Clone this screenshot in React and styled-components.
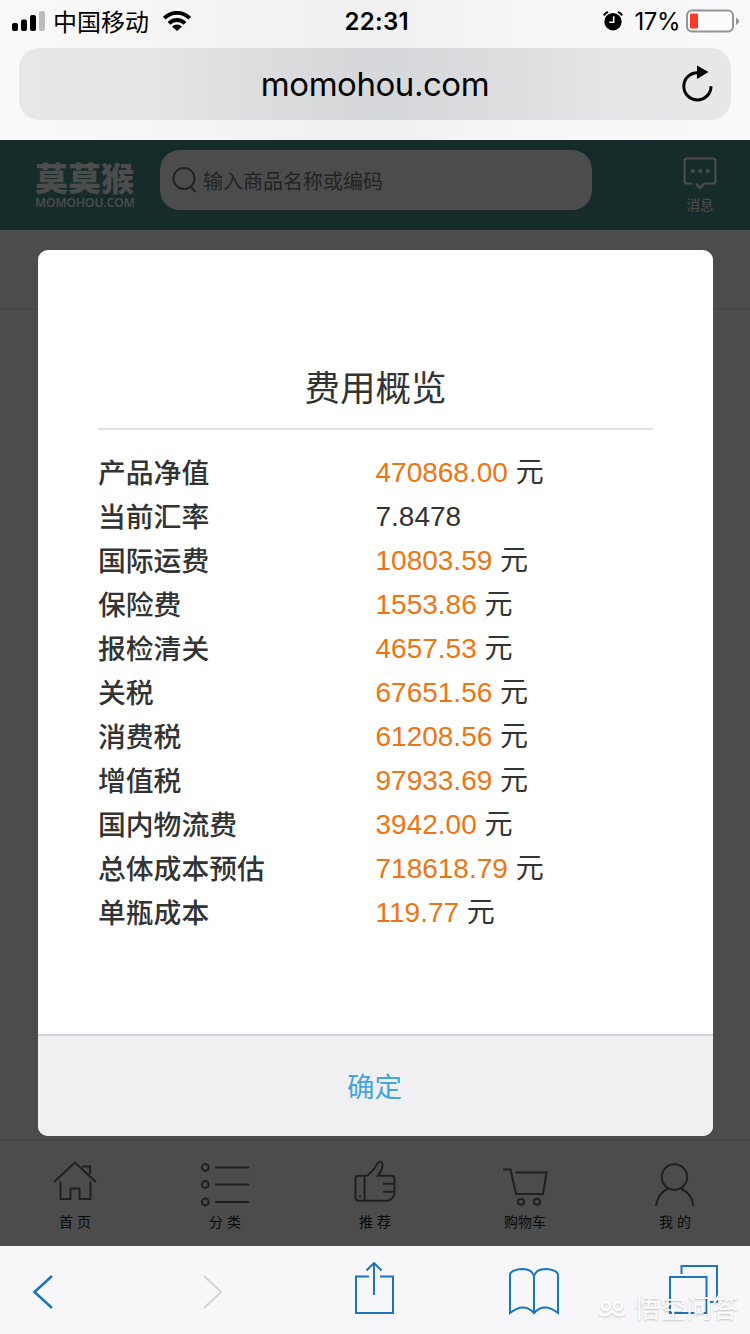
import styled, { createGlobalStyle, css } from 'styled-components';

const GlobalStyle = createGlobalStyle`
  * {
    box-sizing: border-box;
  }
  body {
    margin: 0;
    font-family: 'Liberation Sans', 'Noto Sans CJK SC', sans-serif;
    color: #333;
  }
  svg {
    display: block;
    flex-shrink: 0;
  }
`;

const Screen = styled.div`
  width: 750px;
  height: 1334px;
  display: flex;
  flex-direction: column;
  overflow: hidden;
`;

const BrowserTop = styled.header`
  height: 140px;
  display: flex;
  flex-direction: column;
  background: linear-gradient(90deg, #fafafa 0%, #f3f3f3 30%, #f0f0f0 50%, #f7f7f7 75%, #f9f9fc 100%);
`;

const StatusBar = styled.div`
  height: 40px;
  padding: 0 11px 0 12px;
  display: grid;
  grid-template-columns: 1fr 66px 1fr;
  align-items: center;
  color: #000;
  font-family: Inter, 'Noto Sans CJK SC', sans-serif;
  font-size: 24px;
  line-height: 40px;
`;

const StatusGroup = styled.div`
  display: flex;
  align-items: center;
  justify-content: ${({ $end }) => ($end ? 'flex-end' : 'flex-start')};
`;

const Carrier = styled.span`
  margin: 0 14px 0 8px;
  font-family: 'Noto Sans CJK SC', sans-serif;
`;

const Clock = styled.span`
  padding: 2px 0 0 2px;
  font-weight: 600;
  letter-spacing: 0.3px;
  white-space: nowrap;
`;

const Percent = styled.span`
  margin: 0 6px 0 12px;
  padding-top: 2px;
  letter-spacing: -0.5px;
`;

const AddressBar = styled.div`
  height: 72px;
  margin: 8px 19px 0;
  padding: 0 16px;
  border-radius: 20px;
  display: grid;
  grid-template-columns: 36px 1fr 36px;
  align-items: center;
  background: linear-gradient(90deg, #e8e8e8 0%, #e5e5e6 18%, #dcdcde 36%, #d6d7da 50%, #dddde0 68%, #e6e6e9 85%, #e7e7ea 100%);
  color: #000;
`;

const Url = styled.span`
  grid-column: 2;
  text-align: center;
  font-family: Inter, sans-serif;
  font-size: 33px;
  letter-spacing: -0.45px;
`;

const Page = styled.main`
  position: relative;
  height: 1106px;
  display: flex;
  flex-direction: column;
  background: #fdfdff;
`;

const ShopHeader = styled.div`
  height: 90px;
  padding: 10px 32px 0 35px;
  display: flex;
  align-items: flex-start;
  background: #46938f;
  color: #fff;
`;

const Logo = styled.div`
  width: 100px;
  margin: 9px 25px 0 0;
`;

const LogoName = styled.div`
  font-family: 'Noto Sans CJK SC', sans-serif;
  font-size: 33px;
  font-weight: 900;
  line-height: 36px;
  white-space: nowrap;
`;

const LogoDomain = styled.div`
  margin-top: 2px;
  font-family: 'Open Sans', sans-serif;
  font-size: 12px;
  font-weight: 600;
  line-height: 12px;
  white-space: nowrap;
`;

const SearchBox = styled.div`
  width: 432px;
  height: 60px;
  padding-left: 12px;
  border-radius: 20px;
  display: flex;
  align-items: center;
  gap: 5px;
  background: #fff;
  color: #777;
  font-size: 20px;
`;

const Message = styled.div`
  width: 36px;
  margin: 6px 0 0 auto;
  display: flex;
  flex-direction: column;
  align-items: center;
  gap: 7px;
  font-size: 13.6px;
  line-height: 18px;
  white-space: nowrap;
`;

const ListHead = styled.div`
  height: 80px;
  border-bottom: 2px solid #f0f0f2;
`;

const TabBar = styled.nav`
  height: 107px;
  margin-top: auto;
  border-top: 2px solid #eaeaea;
  display: grid;
  grid-template-columns: repeat(5, 1fr);
`;

const Tab = styled.div`
  padding-top: 14px;
  display: flex;
  flex-direction: column;
  align-items: center;
  color: #6c6c70;
  span {
    margin-top: -3px;
    color: #222;
    font-size: 14px;
    line-height: 20px;
    white-space: pre;
  }
`;

const Mask = styled.div`
  position: absolute;
  inset: 0;
  padding: 110px 37px 0 38px;
  background: rgba(0, 0, 0, 0.7);
`;

const Dialog = styled.section`
  height: 886px;
  border-radius: 10px;
  display: flex;
  flex-direction: column;
  overflow: hidden;
  background: #fff;
`;

const DialogBody = styled.div`
  flex: 1;
  padding: 106px 60px 0;
`;

const DialogTitle = styled.h1`
  margin: 0 0 21px;
  padding-bottom: 6px;
  border-bottom: 2px solid #e0e2e2;
  font-size: 35.5px;
  font-weight: 400;
  line-height: 66px;
  text-align: center;
`;

const FeeRow = styled.div`
  height: 44px;
  display: grid;
  grid-template-columns: 1fr 1fr;
  font-size: 28px;
  line-height: 44px;
`;

const FeeName = styled.span`
  padding-top: 1px;
  font-size: 27.8px;
  font-weight: 500;
`;

const Amount = styled.span`
  ${({ $plain }) =>
    !$plain &&
    css`
      color: #ee7514;
    `}
`;

const ConfirmButton = styled.button`
  height: 102px;
  padding: 0 2px 3px 0;
  border: 0;
  border-top: 2px solid #d3d4d6;
  background: #f0f0f3;
  color: #45a5dc;
  font: inherit;
  font-size: 27.5px;
`;

const BrowserToolbar = styled.footer`
  position: relative;
  height: 88px;
  padding: 4px 0 0 13px;
  display: grid;
  grid-template-columns: 169px 162px 160px 160px 60px;
  align-items: center;
  background: #f7f7f9;
  color: #1b76bd;
`;

const Watermark = styled.div`
  position: absolute;
  right: 12px;
  bottom: 5px;
  display: flex;
  align-items: center;
  gap: 8px;
  color: #fcfcfd;
  font-size: 26px;
  line-height: 40px;
  text-shadow: 0 1px 2px rgba(0, 0, 0, 0.22);
  svg {
    filter: drop-shadow(0 1px 1px rgba(0, 0, 0, 0.18));
  }
`;

const Line = ({ w = 60, h = 60, sw = 2, children, ...rest }) => (
  <svg width={w} height={h} viewBox={`0 0 ${w} ${h}`} fill="none" stroke="currentColor" strokeWidth={sw} {...rest}>
    {children}
  </svg>
);

const SignalIcon = () => (
  <svg width="33" height="20" viewBox="0 0 33 20">
    <rect x="0" y="12" width="6" height="8" rx="2" />
    <rect x="9" y="8.500" width="6" height="11.500" rx="2" />
    <rect x="18" y="4" width="6" height="16" rx="2" />
    <rect x="27" y="0" width="6" height="20" rx="2" fill="#bdbdbd" />
  </svg>
);

const WifiIcon = () => (
  <svg width="28" height="20" viewBox="0 0 28 20">
    <g fill="none" stroke="#000" strokeWidth="3.800">
      <path d="M1.300 7.200a18 18 0 0 1 25.400 0" />
      <path d="M6 12.300a11.300 11.300 0 0 1 16 0" />
    </g>
    <path d="M9 15.500a7.200 7.200 0 0 1 10 0l-5 4.500z" />
  </svg>
);

const AlarmIcon = () => (
  <svg width="20" height="20" viewBox="0 0 20 20">
    <circle cx="10" cy="10.700" r="8.700" />
    <path d="M.8 4.300A12 12 0 0 1 5 .9M19.200 4.300A12 12 0 0 0 15 .9" fill="none" stroke="#000" strokeWidth="2" />
    <path d="M10.700 5.300v6H6.300" fill="none" stroke="#fff" strokeWidth="1.500" />
  </svg>
);

const BatteryIcon = () => (
  <svg width="53" height="24" viewBox="0 0 53 24">
    <rect x="1" y="1.500" width="46" height="21" rx="5" fill="#fbfbfb" stroke="#949494" strokeWidth="2" />
    <rect x="4" y="4.500" width="8" height="15" rx="1" fill="#f93c2c" />
    <path d="M50 8.500q3 1.500 3 3.700T50 16z" fill="#949494" />
  </svg>
);

const ReloadIcon = () => (
  <svg width="36" height="40" viewBox="0 0 36 40">
    <path d="M32 22.200A13.600 13.600 0 1 1 18.500 8.700" fill="none" stroke="#000" strokeWidth="3" />
    <path d="M18 1.500v13.500l11.500-7z" />
  </svg>
);

const tabs = [
  {
    name: '首 页',
    icon: (
      <>
        <path d="M9 27 30 7.500 51 27M15.500 26.500V44h10V33.500h9V44h11V26.500" />
        <path d="M37 11.500h8V19" />
      </>
    ),
  },
  {
    name: '分 类',
    icon: (
      <>
        <circle cx="10.300" cy="12.500" r="3.400" />
        <circle cx="10.300" cy="29.500" r="3.400" />
        <circle cx="10.300" cy="47" r="3.400" />
        <path d="M20 12.500h34M20 29.500h34M20 47h34" />
      </>
    ),
  },
  {
    name: '推 荐',
    icon: (
      <>
        <path d="M19.500 20.700h-6q-3 0-3 3v19q0 3 3 3H43q6.500-2 6.500-9V24q0-3.300-3.300-3.300H33q5-7 4.500-11.700-1.500-3.500-4.500-1.500l-4 6.500-6.500 6.500-3 .2v25" />
        <path d="M38 28.700h11.500M38 36.700h11.500M15 40.500v2" />
      </>
    ),
  },
  {
    name: '购物车',
    icon: (
      <>
        <path d="M8 14.500h7.500L21 39h27l3.500-21.500H20.500" />
        <circle cx="26" cy="46.700" r="3" />
        <circle cx="42" cy="46.700" r="3" />
      </>
    ),
  },
  {
    name: '我 的',
    icon: (
      <>
        <circle cx="29.500" cy="22" r="12.700" />
        <path d="M11 51q1.500-12 12-17.500M36 33.500Q47 39 48.500 51" />
      </>
    ),
  },
];

const fees = [
  { name: '产品净值', amount: '470868.00', unit: '元' },
  { name: '当前汇率', amount: '7.8478' },
  { name: '国际运费', amount: '10803.59', unit: '元' },
  { name: '保险费', amount: '1553.86', unit: '元' },
  { name: '报检清关', amount: '4657.53', unit: '元' },
  { name: '关税', amount: '67651.56', unit: '元' },
  { name: '消费税', amount: '61208.56', unit: '元' },
  { name: '增值税', amount: '97933.69', unit: '元' },
  { name: '国内物流费', amount: '3942.00', unit: '元' },
  { name: '总体成本预估', amount: '718618.79', unit: '元' },
  { name: '单瓶成本', amount: '119.77', unit: '元' },
];

const FeeDialog = () => (
  <Mask>
    <Dialog>
      <DialogBody>
        <DialogTitle>费用概览</DialogTitle>
        {fees.map(({ name, amount, unit }) => (
          <FeeRow key={name}>
            <FeeName>{name}</FeeName>
            <span>
              <Amount $plain={!unit}>{amount}</Amount>
              {unit && ` ${unit}`}
            </span>
          </FeeRow>
        ))}
      </DialogBody>
      <ConfirmButton>确定</ConfirmButton>
    </Dialog>
  </Mask>
);

const App = () => {
  return (
    <Screen>
      <GlobalStyle />
      <BrowserTop>
        <StatusBar>
          <StatusGroup>
            <SignalIcon />
            <Carrier>中国移动</Carrier>
            <WifiIcon />
          </StatusGroup>
          <Clock>22:31</Clock>
          <StatusGroup $end>
            <AlarmIcon />
            <Percent>17%</Percent>
            <BatteryIcon />
          </StatusGroup>
        </StatusBar>
        <AddressBar>
          <Url>momohou.com</Url>
          <ReloadIcon />
        </AddressBar>
      </BrowserTop>

      <Page>
        <ShopHeader>
          <Logo>
            <LogoName>莫莫猴</LogoName>
            <LogoDomain>MOMOHOU.COM</LogoDomain>
          </Logo>
          <SearchBox>
            <Line w={26} h={28}>
              <circle cx="12" cy="12.500" r="10.500" />
              <path d="m18.500 20.500 5 5.500" />
            </Line>
            输入商品名称或编码
          </SearchBox>
          <Message>
            <Line w={34} h={34} sw={2.2}>
              <path d="M9.500 27.500H4q-2.500 0-2.500-2.500V5Q1.500 2.500 4 2.500h26q2.500 0 2.500 2.500v20q0 2.500-2.500 2.500h-8.500L17 32l-4-4.500" />
              <path d="M8 15h3.500M15.500 15H19M23 15h3.500" strokeWidth="3.500" />
            </Line>
            消息
          </Message>
        </ShopHeader>
        <ListHead />
        <TabBar>
          {tabs.map(({ name, icon }) => (
            <Tab key={name}>
              <Line>{icon}</Line>
              <span>{name}</span>
            </Tab>
          ))}
        </TabBar>
        <FeeDialog />
      </Page>

      <BrowserToolbar>
        <Line sw={2.6}>
          <path d="M39 14 21.500 30 39 46" />
        </Line>
        <Line sw={2.2} color="#d5d6d9">
          <path d="m22 14 17 16-17 16" />
        </Line>
        <Line>
          <path d="M25 14.500H12V51h37V14.500H36M30 33V1M22.500 8.500 30 1l7.500 7.500" />
        </Line>
        <Line>
          <path d="M30 52V14Q28 7 18 7 6 8 6 13v38q14-11 24 0 10-11 24 0V13Q54 8 42 7q-10 0-12 7" />
        </Line>
        <Line>
          <path d="M6 15h36.500v36H6zM17.500 12V4H53v36h-7" />
        </Line>
        <Watermark>
          <Line w={28} h={20} sw={2.5}>
            <circle cx="8" cy="7" r="4" />
            <circle cx="20" cy="7" r="4" />
            <path d="M1 14q6 5 13-2 7 7 13 2" />
          </Line>
          悟空问答
        </Watermark>
      </BrowserToolbar>
    </Screen>
  );
};

export default App;
